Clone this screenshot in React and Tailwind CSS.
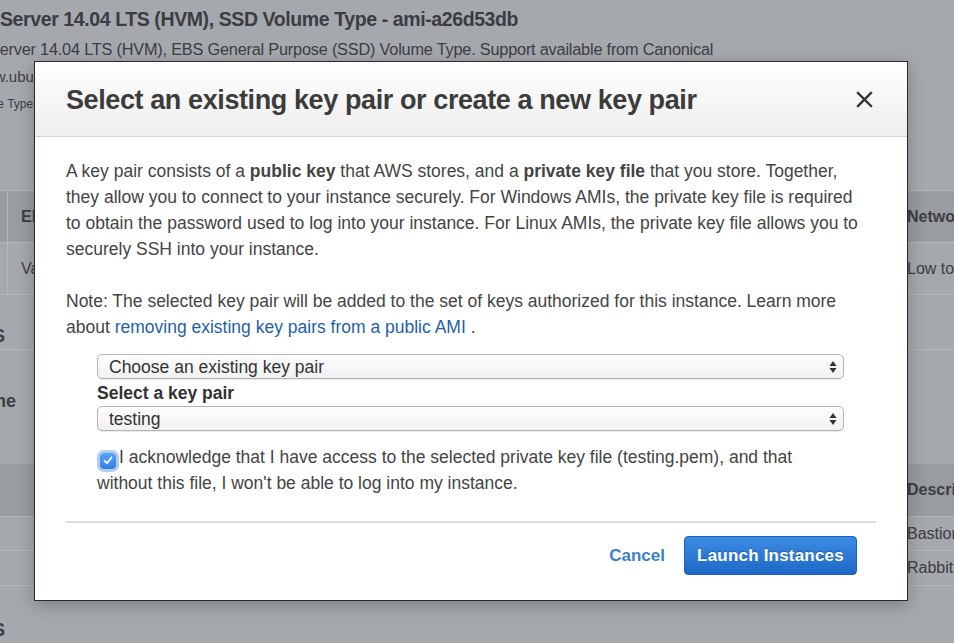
import React from 'react';

function SelectArrows() {
  return (
    <svg width="8" height="14" viewBox="0 0 8 14" className="shrink-0">
      <path d="M4 1 L7.5 6 L0.5 6 Z" fill="#333" />
      <path d="M4 13 L7.5 8 L0.5 8 Z" fill="#333" />
    </svg>
  );
}

function FakeSelect({ value }) {
  return (
    <div className="flex h-[25px] items-center justify-between rounded-[5px] border border-[#b4b4b4] bg-gradient-to-b from-[#fdfdfd] to-[#f1f1f1] pl-[11px] pr-[6px] text-[17.5px] text-[#333] shadow-[0_1px_0_rgba(0,0,0,0.08)]">
      <span>{value}</span>
      <SelectArrows />
    </div>
  );
}

export default function App() {
  return (
    <div className="relative h-[643px] w-[954px] overflow-hidden bg-[#a5a8ad] text-[#3b3e43]" style={{ fontFamily: '"Liberation Sans", Arial, sans-serif' }}>
      {/* page behind the dialog */}
      <div className="h-[190px] pt-[7px] whitespace-nowrap">
        <div className="text-[19.5px] font-bold leading-[24px] tracking-[-0.4px] text-[#3a3d42]">Server 14.04 LTS (HVM), SSD Volume Type - ami-a26d53db</div>
        <div className="-ml-[11px] mt-[7px] text-[16.3px] leading-[22px] tracking-[-0.2px]">Server 14.04 LTS (HVM), EBS General Purpose (SSD) Volume Type. Support available from Canonical</div>
        <div className="-ml-[27px] mt-[6px] text-[15px] leading-[22px]">www.ubuntu.com</div>
        <div className="-ml-[36px] mt-[8px] text-[12px] leading-[16px]">Volume Type: gp2</div>
      </div>

      <div className="flex h-[53px] border-y border-[#b3b6ba] bg-[#999ca1] text-[16px] font-bold whitespace-nowrap">
        <div className="w-[8px] border-r border-[#b3b6ba]"></div>
        <div className="flex flex-1 items-center pl-[13px]">EBS</div>
        <div className="flex w-[47px] items-center overflow-hidden">Network</div>
      </div>
      <div className="flex h-[52px] border-b border-[#b3b6ba] text-[16px] whitespace-nowrap">
        <div className="w-[8px] border-r border-[#b3b6ba]"></div>
        <div className="flex flex-1 items-center pl-[13px]">Variable</div>
        <div className="flex w-[47px] items-center overflow-hidden">Low to Moderate</div>
      </div>

      <div className="flex h-[55px] items-center border-b border-[#b3b6ba] pt-[28px] text-[18px] font-bold">
        <span className="-ml-[7px]">S</span>
      </div>
      <div className="flex h-[114px] items-start pt-[38px] text-[18px] font-bold">
        <span className="-ml-[20px]">ame</span>
      </div>

      <div className="flex h-[53px] items-center justify-end border-b border-[#b3b6ba] bg-[#999ca1] text-[16px] font-bold whitespace-nowrap">
        <span className="w-[47px] overflow-hidden">Description</span>
      </div>
      <div className="flex h-[34px] items-center justify-end border-b border-[#b3b6ba] text-[16px] whitespace-nowrap">
        <span className="w-[47px] overflow-hidden">Bastion</span>
      </div>
      <div className="flex h-[35px] items-center justify-end border-b border-[#b3b6ba] text-[16px] whitespace-nowrap">
        <span className="w-[47px] overflow-hidden">RabbitMQ</span>
      </div>
      <div className="pt-[31px] text-[18px] font-bold">
        <span className="-ml-[7px]">S</span>
      </div>

      {/* dialog */}
      <div className="absolute left-[34px] top-[61px] flex h-[540px] w-[874px] flex-col border border-[#2a2a2a] bg-white shadow-[0_4px_16px_rgba(0,0,0,0.25)]">
        <div className="flex h-[75px] shrink-0 items-center justify-between border-b border-[#d4d4d4] bg-gradient-to-b from-[#ffffff] to-[#eeeeee] pl-[31px] pr-[34px]">
          <h1 className="pt-[3px] text-[27px] font-bold tracking-[-0.4px] text-[#3c3c3c]">Select an existing key pair or create a new key pair</h1>
          <svg width="17" height="17" viewBox="0 0 17 17">
            <path d="M2 2 L15 15 M15 2 L2 15" stroke="#333" strokeWidth="2.4" strokeLinecap="square" />
          </svg>
        </div>

        <div className="flex flex-1 flex-col px-[31px] pt-[21px] text-[17.5px] leading-[26px] text-[#444]">
          <p>
            A key pair consists of a <b>public key</b> that AWS stores, and a <b>private key file</b> that you store. Together,<br />
            they allow you to connect to your instance securely. For Windows AMIs, the private key file is required<br />
            to obtain the password used to log into your instance. For Linux AMIs, the private key file allows you to<br />
            securely SSH into your instance.
          </p>
          <p className="mt-[26px]">
            Note: The selected key pair will be added to the set of keys authorized for this instance. Learn more about <a className="text-[#1f5fa9]">removing existing key pairs from a public AMI</a> .
          </p>

          <div className="ml-[31px] mr-[32px] mt-[14px]">
            <FakeSelect value="Choose an existing key pair" />
            <div className="mt-[1px] text-[17.5px] font-bold leading-[26px] text-[#333]">Select a key pair</div>
            <FakeSelect value="testing" />
            <div className="mt-[13px] pr-[40px] leading-[26px]">
              <span className="relative ml-[3px] mr-[3px] inline-flex h-[16px] w-[16px] translate-y-[2px] items-center justify-center rounded-[4px] bg-gradient-to-b from-[#5aa2f5] to-[#2f7ee6] align-baseline shadow-[0_0_0_3px_rgba(110,165,235,0.55)]">
                <svg width="10" height="9" viewBox="0 0 10 9">
                  <path d="M1.5 4.8 L4 7.2 L8.5 1.5" stroke="#fff" strokeWidth="1.8" fill="none" strokeLinecap="round" strokeLinejoin="round" />
                </svg>
              </span>
              I acknowledge that I have access to the selected private key file (testing.pem), and that without this file, I won't be able to log into my instance.
            </div>
          </div>

          <div className="mt-[25px] h-[2px] bg-[#dcdcdc]"></div>

          <div className="mt-[13px] flex items-center justify-end gap-[19px] pr-[19px]">
            <button className="text-[17px] font-bold text-[#3c7fcf]">Cancel</button>
            <button className="h-[39px] w-[173px] rounded-[4px] border border-[#1c62bd] bg-gradient-to-b from-[#3d8ce3] to-[#1d68c7] text-[17px] font-bold tracking-[0.2px] text-white [text-shadow:0_-1px_0_rgba(0,0,0,0.25)]">
              Launch Instances
            </button>
          </div>
        </div>
      </div>
    </div>
  );
}
